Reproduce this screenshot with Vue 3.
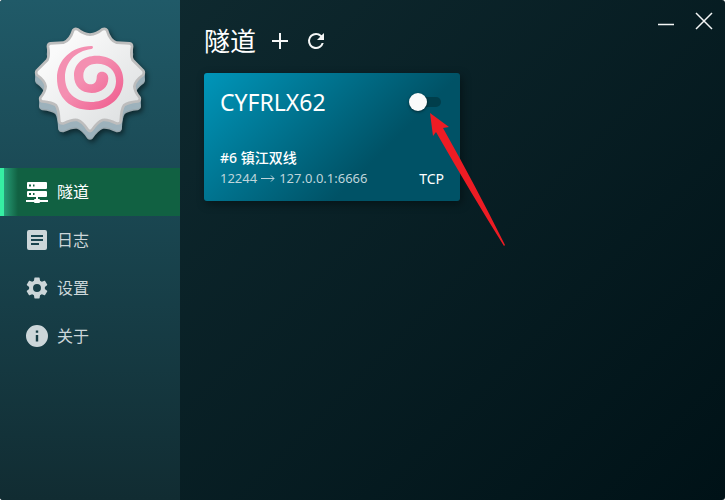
<script setup>
import { ref } from 'vue'

const active = ref('tunnels')
const enabled = ref(false)
const items = [
  { id: 'tunnels', label: '隧道' },
  { id: 'logs', label: '日志' },
  { id: 'settings', label: '设置' },
  { id: 'about', label: '关于' },
]
const layers = [20, 16, 12, 8, 4]
</script>

<template>
  <div class="window">
    <aside class="sidebar">
      <svg class="logo" viewBox="0 0 420 420" aria-hidden="true">
        <defs>
          <linearGradient id="cake" x1="0" y1="0" x2="1" y2="1">
            <stop offset="0.2" stop-color="#fafafa" />
            <stop offset="1" stop-color="#d9dcdd" />
          </linearGradient>
          <linearGradient id="swirl" x1="0" y1="0" x2="1" y2="1">
            <stop offset="0.45" stop-color="#f48fb1" />
            <stop offset="0.9" stop-color="#f06292" />
          </linearGradient>
          <path
            id="star"
            d="M160 60 Q165 54 173 58 Q190 73 210 74 Q230 73 247 58 Q256 54 261 61 Q270 92 290 98 L329 100 Q337 102 336 111 Q331 137 338 150 L369 181 Q374 188 369 195 Q345 212 343 229 Q344 245 359 263 Q361 272 353 274 Q323 277 312 286 Q304 296 302 335 Q299 342 289 340 Q262 327 248 330 Q233 335 216 360 Q210 366 204 360 Q188 335 172 330 Q158 327 131 340 Q121 342 118 335 Q116 296 108 286 Q97 277 67 274 Q59 272 61 263 Q76 245 77 229 Q75 212 51 195 Q46 188 51 181 L82 150 Q89 137 84 111 Q83 102 91 100 L130 98 Q150 92 160 60Z"
          />
        </defs>
        <g class="logo-body">
          <use href="#star" y="23" fill="#9aa8ae" stroke="#9aa8ae" stroke-width="7" stroke-linejoin="round" />
          <use v-for="y in layers" :key="y" href="#star" :y="y" fill="#9db2bc" stroke="#9db2bc" stroke-width="5" stroke-linejoin="round" />
          <use href="#star" fill="url(#cake)" stroke="#bdbdbd" stroke-width="8" stroke-linejoin="round" />
        </g>
        <path
          d="M214 108C157 109 111 148 111 205C111 264 151 300 210 300C270 300 310 262 310 211C310 166 275 137 230 137C189 137 162 162 162 196C162 229 183 249 215 249C246 249 265 231 265 205C265 192 256 185 246 185C235 185 230 193 230 204C229 217 222 223 212 223C199 223 190 213 190 197C190 174 207 161 231 161C265 161 288 182 288 213C288 251 255 276 213 276C165 276 135 247 135 202C135 157 166 123 214 117C221 115 220 108 214 108Z"
          fill="url(#swirl)"
        />
      </svg>
      <nav class="menu" aria-label="主菜单">
        <button
          v-for="item in items"
          :key="item.id"
          type="button"
          class="menu-item"
          :class="{ active: active === item.id }"
          @click="active = item.id"
        >
          <svg class="menu-icon" viewBox="0 0 24 24" aria-hidden="true">
            <path
              v-if="item.id === 'tunnels'"
              fill-rule="evenodd"
              d="M3 2h18a1 1 0 0 1 1 1v5a1 1 0 0 1-1 1H3a1 1 0 0 1-1-1V3a1 1 0 0 1 1-1zm1 2.500v2h2v-2zm4 0v2h1.500v-2zM3 11h18a1 1 0 0 1 1 1v4a1 1 0 0 1-1 1h-8v2h1a1 1 0 0 1 1 1h8v2h-8a1 1 0 0 1-1 1h-4a1 1 0 0 1-1-1H1v-2h8a1 1 0 0 1 1-1h1v-2H3a1 1 0 0 1-1-1v-4a1 1 0 0 1 1-1zm1 2v2h2v-2zm4 0v2h1.500v-2z"
            />
            <path
              v-else-if="item.id === 'logs'"
              d="M20 2H4a2 2 0 0 0-2 2v16a2 2 0 0 0 2 2h16a2 2 0 0 0 2-2V4a2 2 0 0 0-2-2zm-6 15H6v-2h8v2zm4-4H6v-2h12v2zm0-4H6V7h12v2z"
            />
            <path
              v-else-if="item.id === 'settings'"
              transform="translate(-1.200 -1.200) scale(1.100)"
              d="M19.140 12.940c.040-.300.060-.610.060-.940 0-.320-.020-.640-.070-.940l2.030-1.580c.180-.140.230-.410.120-.610l-1.920-3.320c-.120-.220-.370-.290-.590-.220l-2.390.960c-.500-.380-1.030-.700-1.620-.940l-.360-2.540c-.040-.240-.240-.410-.480-.410h-3.840c-.240 0-.430.170-.470.410l-.360 2.540c-.590.240-1.130.570-1.620.940l-2.390-.960c-.220-.080-.470 0-.590.220L2.740 8.870c-.120.210-.080.470.120.610l2.030 1.580c-.050.300-.090.630-.090.940s.020.640.070.940l-2.030 1.580c-.180.140-.230.410-.120.610l1.920 3.320c.120.220.370.290.590.220l2.390-.960c.500.380 1.030.700 1.620.940l.360 2.540c.050.240.240.410.480.410h3.840c.240 0 .440-.170.470-.410l.360-2.540c.590-.240 1.130-.560 1.620-.940l2.390.960c.220.080.470 0 .590-.220l1.920-3.320c.120-.220.070-.470-.120-.610zM12 15.600a3.600 3.600 0 1 1 0-7.200 3.600 3.600 0 0 1 0 7.200z"
            />
            <path
              v-else
              d="M12 1a11 11 0 1 0 0 22 11 11 0 0 0 0-22zm1.200 16.500h-2.400V11h2.400zm0-8.700h-2.400V6.400h2.400z"
            />
          </svg>
          <span>{{ item.label }}</span>
        </button>
      </nav>
    </aside>

    <main class="content">
      <div class="window-controls">
        <button type="button" aria-label="最小化">
          <svg viewBox="0 0 18 18"><path d="M1 12.500h16" /></svg>
        </button>
        <button type="button" aria-label="关闭">
          <svg viewBox="0 0 18 18"><path d="M1 1l16 16M17 1L1 17" /></svg>
        </button>
      </div>

      <header class="heading">
        <h1>隧道</h1>
        <button type="button" aria-label="新建隧道">
          <svg viewBox="0 0 24 24"><path d="M11 4h2v7h7v2h-7v7h-2v-7H4v-2h7z" /></svg>
        </button>
        <button type="button" aria-label="刷新">
          <svg viewBox="0 0 24 24">
            <path d="M17.650 6.350A7.960 7.960 0 0 0 12 4a8 8 0 1 0 7.730 10h-2.080A6 6 0 1 1 12 6c1.660 0 3.140.690 4.220 1.780L13 11h7V4z" />
          </svg>
        </button>
      </header>

      <section class="tunnels">
        <article class="card">
          <div class="card-row">
            <h2>CYFRLX62</h2>
            <input v-model="enabled" class="switch" type="checkbox" role="switch" aria-label="启用 CYFRLX62" />
          </div>
          <div class="details">
            <div class="node">#6 镇江双线</div>
            <div class="card-row">
              <span class="route">12244 <svg class="to" viewBox="0 0 14 10" role="img" aria-label="到"><path d="M0 4.500h13M10 1.500l3 3-3 3" /></svg> 127.0.0.1:6666</span>
              <span class="protocol">TCP</span>
            </div>
          </div>
          <svg class="pointer" viewBox="0 0 76 134" aria-hidden="true">
            <path d="M0 0L19 14 13 15Q44 70 75 132L74 133Q42 82 6 19L3 23Z" />
          </svg>
        </article>
      </section>
    </main>
  </div>
</template>

<style>
body {
  margin: 0;
  background: #fff;
}
</style>

<style scoped>
* {
  box-sizing: border-box;
}

.window {
  display: flex;
  min-height: 100vh;
  overflow: hidden;
  border-radius: 3px;
  background: linear-gradient(135deg, #112d33, #001217);
  color: #fff;
  font-family: "Noto Sans", "Noto Sans CJK SC", sans-serif;
}

button {
  padding: 0;
  border: 0;
  background: none;
  color: inherit;
  font: inherit;
  cursor: pointer;
}

svg {
  display: block;
}

h1,
h2 {
  margin: 0;
  font-weight: 400;
}

.sidebar {
  flex: 0 0 180px;
  background: linear-gradient(#205a68, #112c32);
}

.logo {
  width: 140px;
  height: 140px;
  margin: 10px auto 18px;
}

.logo-body {
  filter: drop-shadow(6px 8px 8px rgba(0, 0, 0, 0.5));
}

.menu {
  display: flex;
  flex-direction: column;
}

.menu-item {
  display: flex;
  align-items: center;
  gap: 8px;
  height: 48px;
  padding: 0 25px;
  color: #ccd6d9;
  font-size: 16px;
  line-height: 24px;
}

.menu-item.active {
  background: linear-gradient(90deg, #36efa3 4px, #279d77 4px, #116142 18px);
  color: #fff;
}

.menu-icon {
  width: 24px;
  height: 24px;
  fill: currentColor;
}

.content {
  flex: 1;
  position: relative;
  padding: 24px;
}

.window-controls {
  position: absolute;
  top: 12px;
  right: 12px;
  display: flex;
  gap: 20px;
}

.window-controls svg {
  width: 18px;
  height: 18px;
  fill: none;
  stroke: #f4f6f6;
  stroke-width: 1.500;
}

.heading {
  display: flex;
  align-items: center;
  gap: 12px;
  height: 34px;
  margin-bottom: 15px;
}

.heading h1 {
  font-size: 26px;
  line-height: 34px;
}

.heading svg {
  width: 24px;
  height: 24px;
  fill: #f4f6f6;
}

.tunnels {
  display: flex;
  flex-wrap: wrap;
  gap: 16px;
}

.card {
  position: relative;
  display: flex;
  flex-direction: column;
  justify-content: space-between;
  width: 256px;
  min-height: 128px;
  padding: 13px 16px 12px;
  border-radius: 3px;
  background: linear-gradient(135deg, #0096ba, #005266 67%);
  box-shadow: 2px 3px 10px rgba(0, 0, 0, 0.4);
}

.card-row {
  display: flex;
  align-items: center;
  justify-content: space-between;
}

.card h2 {
  font-size: 23px;
  line-height: 32px;
}

.switch {
  appearance: none;
  display: flex;
  align-items: center;
  width: 32px;
  height: 10px;
  margin: 0 3px 0 0;
  border-radius: 5px;
  background: #003e4b;
  cursor: pointer;
}

.switch::before {
  content: "";
  width: 18px;
  height: 18px;
  border-radius: 50%;
  background: #fafafa;
  box-shadow: 0 1px 3px rgba(0, 0, 0, 0.5);
}

.switch:checked::before {
  margin-left: auto;
}

.details {
  font-size: 14px;
  line-height: 21px;
}

.node {
  font-weight: 500;
}

.route {
  display: flex;
  align-items: center;
  gap: 4px;
  color: #bfd5db;
  font-size: 13px;
}

.to {
  width: 14px;
  height: 10px;
  fill: none;
  stroke: currentColor;
}

.pointer {
  position: absolute;
  top: 40px;
  left: 226px;
  width: 76px;
  height: 134px;
  fill: #ed1c24;
  pointer-events: none;
}
</style>
